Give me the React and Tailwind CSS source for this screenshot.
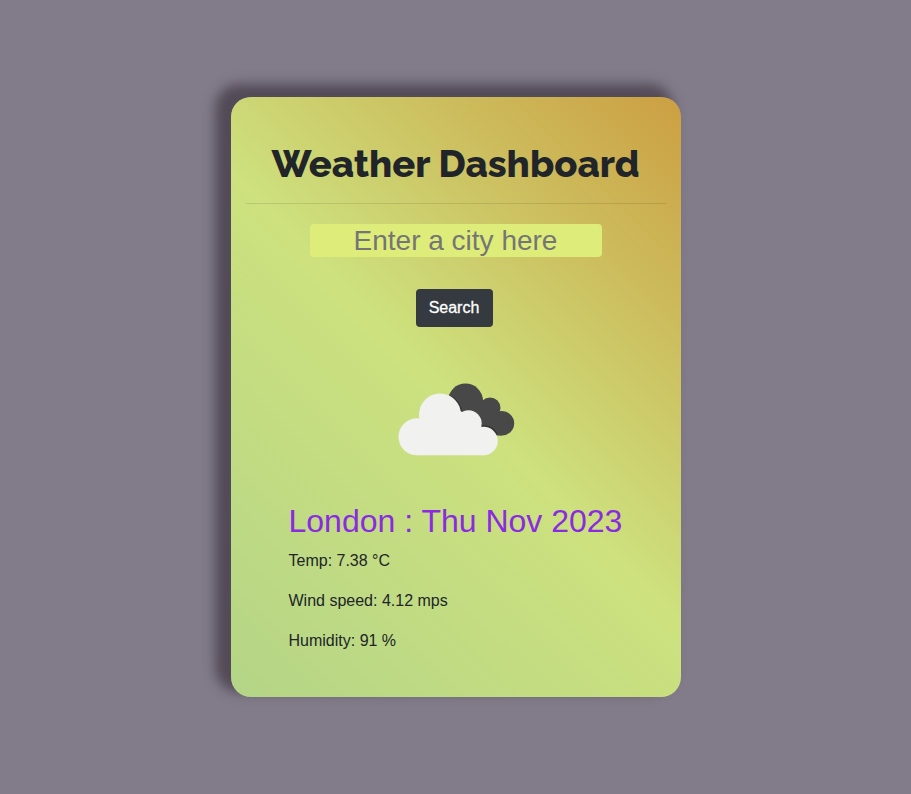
export default function App() {
  return (
    <main className="flex h-screen w-full items-center justify-center bg-[#827b89] font-['Liberation_Sans',Arial,sans-serif] text-[#212529]">
      <section className="flex h-[600px] w-[450px] flex-col items-center rounded-[20px] bg-[linear-gradient(45deg,#b4d587_0%,#cde17e_50%,#cc9f42_100%)] px-[15px] shadow-[-12px_-9px_12px_4px_#534b58]">
        <h1 className="mt-[39px] whitespace-nowrap font-['Raleway','Open_Sans',sans-serif] text-[38px] leading-[56px] font-extrabold">Weather Dashboard</h1>
        <hr className="mt-[11px] w-full border-black/10" />
        <input className="mt-5 h-[33px] w-[292px] rounded bg-[#deed79] text-center text-[28px] outline-none placeholder:text-[#757575]" placeholder="Enter a city here" />
        <button className="mt-8 mr-[3px] h-[38px] w-[77px] rounded bg-[#343a40] text-base text-white [-webkit-text-stroke:0.3px_white]">Search</button>
        <svg className="mt-[52px] h-[80px] w-[120px]" viewBox="396 379 120 80">
          <g fill="#484849"><circle cx="465.5" cy="401" r="17.5" /><circle cx="490" cy="408" r="10.5" /><circle cx="502" cy="423.3" r="12.2" /><path d="M460 400l30 0 9 14 3 21.5h-20z" /></g>
          <g fill="none" stroke="#343436" strokeWidth="1.5"><path d="M450.5 396.5a21 21 0 0 1 11 15.5q15-2 20 14q11-1 15.5 8" /></g>
          <g fill="#f1f1ef"><circle cx="417" cy="436.8" r="18.5" /><circle cx="440" cy="414.5" r="21" /><circle cx="468.5" cy="423.5" r="13.2" /><circle cx="483.5" cy="441" r="14.3" /><path d="M417 455.3h67l-3-29-20-15h-41z" /></g>
        </svg>
        <div className="mt-[43px] w-[334px]">
          <h2 className="whitespace-nowrap text-[32px] leading-[38px] text-[#8a2be2]">London : Thu Nov 2023</h2>
          <p className="mt-[9px] text-base">Temp: 7.38 °C</p>
          <p className="mt-4 text-base">Wind speed: 4.12 mps</p>
          <p className="mt-4 text-base">Humidity: 91 %</p>
        </div>
      </section>
    </main>
  );
}
